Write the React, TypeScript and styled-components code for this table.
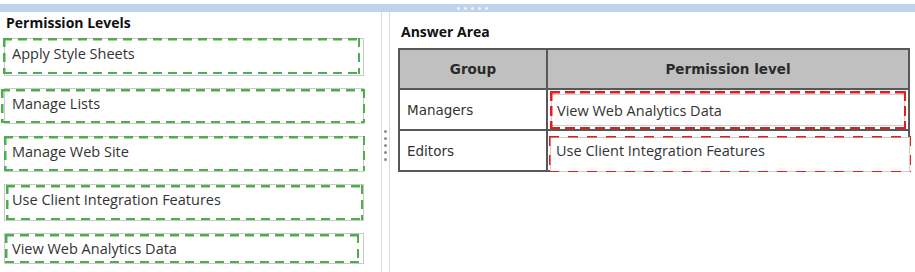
import React from "react";
import styled, { createGlobalStyle, css } from "styled-components";

const GlobalStyle = createGlobalStyle`
  html, body {
    margin: 0;
    padding: 0;
    background: #ffffff;
  }
  body {
    font-family: "Open Sans", "Noto Sans", sans-serif;
  }
`;

/* Dashed rectangle painted with gradients so the dash rhythm is exact. */
const dashedFrame = (color: string, w: number, dash: number, gap: number) => css`
  background-image:
    repeating-linear-gradient(90deg, ${color} 0 ${dash}px, transparent ${dash}px ${dash + gap}px),
    repeating-linear-gradient(90deg, ${color} 0 ${dash}px, transparent ${dash}px ${dash + gap}px),
    repeating-linear-gradient(180deg, ${color} 0 ${dash}px, transparent ${dash}px ${dash + gap}px),
    repeating-linear-gradient(180deg, ${color} 0 ${dash}px, transparent ${dash}px ${dash + gap}px);
  background-size: 100% ${w}px, 100% ${w}px, ${w}px 100%, ${w}px 100%;
  background-position: left top, left bottom, left top, right top;
  background-repeat: no-repeat;
`;

const Page = styled.div`
  width: 915px;
  height: 272px;
  box-sizing: border-box;
  padding-top: 4px;
  display: flex;
  flex-direction: column;
  overflow: hidden;
  background: #ffffff;
`;

const TopBar = styled.div`
  height: 8px;
  flex: none;
  background: #bfd4ec;
  display: flex;
  align-items: center;
  justify-content: center;
  gap: 4px;
  padding-left: 30px;
`;

const BarDot = styled.span`
  width: 3px;
  height: 3px;
  border-radius: 50%;
  background: #eef4fb;
`;

const Body = styled.div`
  flex: 1;
  display: flex;
  min-height: 0;
`;

const LeftPanel = styled.section`
  width: 381px;
  flex: none;
  box-sizing: border-box;
  padding-top: 3px;
`;

const PanelTitle = styled.h2<{ $indent: number }>`
  margin: 0 0 0 ${(p) => p.$indent}px;
  font: 700 14px/16px "Open Sans", "Noto Sans", sans-serif;
  color: #111111;
`;

const LevelList = styled.div`
  display: flex;
  flex-direction: column;
  gap: 12px;
  margin-top: 7px;
  padding-left: 4px;
  width: 360px;
`;

const LevelItem = styled.div<{ $h: number }>`
  position: relative;
  box-sizing: border-box;
  height: ${(p) => p.$h}px;
  border: 1px solid #c9c9c9;
  padding: 5px 0 0 7px;
  font: 400 14.5px/19px "Open Sans", "Noto Sans", sans-serif;
  color: #333333;
  background: #ffffff;
`;

const DashFrame = styled.span<{ $inset: string; $color: string; $w: number; $dash: number; $gap: number }>`
  position: absolute;
  inset: ${(p) => p.$inset};
  pointer-events: none;
  ${(p) => dashedFrame(p.$color, p.$w, p.$dash, p.$gap)}
`;

const Splitter = styled.div`
  width: 9px;
  flex: none;
  box-sizing: border-box;
  border-left: 1px solid #dcdcdc;
  border-right: 1px solid #dcdcdc;
  display: flex;
  flex-direction: column;
  align-items: center;
  justify-content: center;
  gap: 4px;
  padding-top: 6px;
`;

const GripDot = styled.span`
  width: 3px;
  height: 3px;
  border-radius: 50%;
  background: #8c8c8c;
`;

const RightPanel = styled.section`
  flex: 1;
  box-sizing: border-box;
  padding: 12px 5px 0 8px;
`;

const AnswerTable = styled.div`
  margin-top: 8px;
  display: grid;
  grid-template-columns: 146px 1fr;
  grid-template-rows: 38px 39px 39px;
  gap: 2px;
  padding: 2px;
  background: #585858;
`;

const HeadCell = styled.div`
  background: #c0c0c0;
  display: flex;
  align-items: center;
  justify-content: center;
  font: 700 13.5px/16px "DejaVu Sans", Verdana, sans-serif;
  color: #2b2b2b;
`;

const GroupCell = styled.div`
  background: #ffffff;
  display: flex;
  align-items: center;
  padding-left: 7px;
  font: 400 13.5px/16px "DejaVu Sans", Verdana, sans-serif;
  color: #333333;
`;

const AnswerCell = styled.div`
  background: #ffffff;
  display: flex;
  min-width: 0;
`;

const AnswerSlot = styled.div<{ $margin: string; $textTop: number }>`
  position: relative;
  flex: 1;
  margin: ${(p) => p.$margin};
  box-sizing: border-box;
  border: 1px solid #cfcfcf;
  background: #ffffff;
  padding: ${(p) => p.$textTop}px 0 0 5px;
  font: 400 14.5px/19px "Open Sans", "Noto Sans", sans-serif;
  color: #333333;
`;

const levels = [
  { label: "Apply Style Sheets", h: 38, frame: "-1px 3px 1px -2px" },
  { label: "Manage Lists", h: 36, frame: "0 -2px 0 -4px" },
  { label: "Manage Web Site", h: 36, frame: "-1px -2px 0 -1px" },
  { label: "Use Client Integration Features", h: 37, frame: "0 0 0 1px" },
  { label: "View Web Analytics Data", h: 31, frame: "0 4px 0 0" },
];

const answers = [
  {
    group: "Managers",
    level: "View Web Analytics Data",
    margin: "4px 3px 3px 3px",
    frame: "-4px -2px -4px -2px",
    textTop: 6,
    w: 2.5,
    dash: 10,
    gap: 5,
  },
  {
    group: "Editors",
    level: "Use Client Integration Features",
    margin: "6px -2px -2px 2px",
    frame: "-2px -2px -1px -2px",
    textTop: 3,
    w: 1.5,
    dash: 10,
    gap: 9,
  },
];

const GREEN = "#4cae4c";
const RED = "#e51c1c";

export default function App() {
  return (
    <>
      <GlobalStyle />
      <Page>
        <TopBar>
          {[0, 1, 2, 3, 4].map((i) => (
            <BarDot key={i} />
          ))}
        </TopBar>
        <Body>
          <LeftPanel>
            <PanelTitle $indent={6}>Permission Levels</PanelTitle>
            <LevelList>
              {levels.map((l) => (
                <LevelItem key={l.label} $h={l.h}>
                  {l.label}
                  <DashFrame $inset={l.frame} $color={GREEN} $w={2.5} $dash={9} $gap={6} />
                </LevelItem>
              ))}
            </LevelList>
          </LeftPanel>
          <Splitter>
            {[0, 1, 2, 3, 4].map((i) => (
              <GripDot key={i} />
            ))}
          </Splitter>
          <RightPanel>
            <PanelTitle $indent={3}>Answer Area</PanelTitle>
            <AnswerTable>
              <HeadCell>Group</HeadCell>
              <HeadCell>Permission level</HeadCell>
              {answers.map((a) => (
                <React.Fragment key={a.group}>
                  <GroupCell>{a.group}</GroupCell>
                  <AnswerCell>
                    <AnswerSlot $margin={a.margin} $textTop={a.textTop}>
                      {a.level}
                      <DashFrame $inset={a.frame} $color={RED} $w={a.w} $dash={a.dash} $gap={a.gap} />
                    </AnswerSlot>
                  </AnswerCell>
                </React.Fragment>
              ))}
            </AnswerTable>
          </RightPanel>
        </Body>
      </Page>
    </>
  );
}
